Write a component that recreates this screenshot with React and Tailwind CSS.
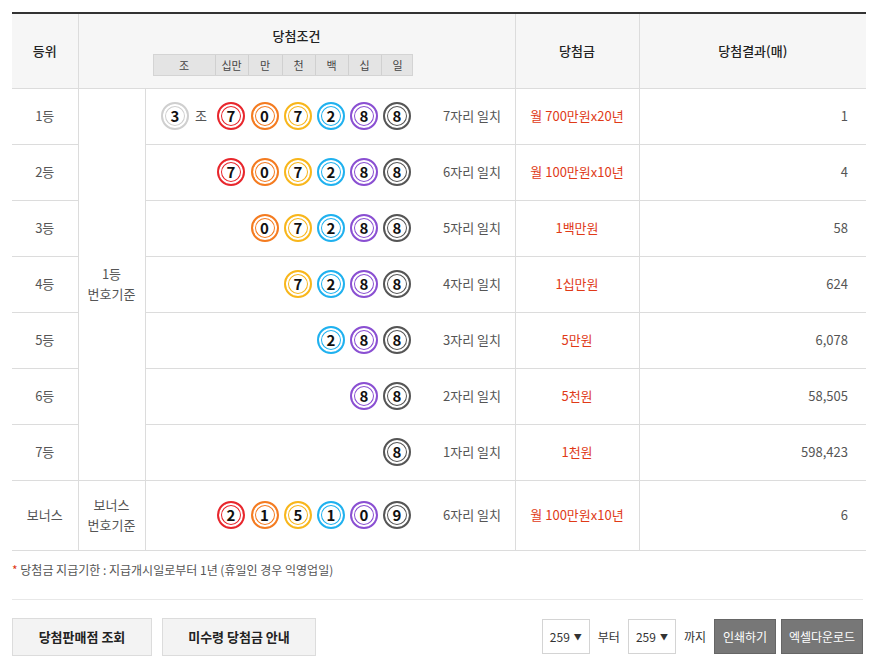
import React from 'react';

const RING = {
  r: 'border-[#e8262c] shadow-[inset_0_0_0_2px_#fff,inset_0_0_0_3px_#e8262c]',
  o: 'border-[#f47b20] shadow-[inset_0_0_0_2px_#fff,inset_0_0_0_3px_#f47b20]',
  y: 'border-[#f8b61b] shadow-[inset_0_0_0_2px_#fff,inset_0_0_0_3px_#f8b61b]',
  b: 'border-[#1fb1ef] shadow-[inset_0_0_0_2px_#fff,inset_0_0_0_3px_#1fb1ef]',
  p: 'border-[#8a4fd2] shadow-[inset_0_0_0_2px_#fff,inset_0_0_0_3px_#8a4fd2]',
  k: 'border-[#555] shadow-[inset_0_0_0_2px_#fff,inset_0_0_0_3px_#555]',
  g: 'border-[#cfcfcf] shadow-[inset_0_0_0_2px_#fff,inset_0_0_0_3px_#cfcfcf]',
};

const Ball = ({ n, c }) => (
  <span className={`w-[28px] h-[28px] rounded-full border-2 bg-white flex items-center justify-center text-[15px] font-bold text-[#111] ${RING[c]}`}>
    {n}
  </span>
);

const main = [['7', 'r'], ['0', 'o'], ['7', 'y'], ['2', 'b'], ['8', 'p'], ['8', 'k']];
const bonus = [['2', 'r'], ['1', 'o'], ['5', 'y'], ['1', 'b'], ['0', 'p'], ['9', 'k']];

const rows = [
  { rank: '1등', n: 6, jo: true, match: '7자리 일치', prize: '월 700만원x20년', count: '1' },
  { rank: '2등', n: 6, match: '6자리 일치', prize: '월 100만원x10년', count: '4' },
  { rank: '3등', n: 5, match: '5자리 일치', prize: '1백만원', count: '58' },
  { rank: '4등', n: 4, match: '4자리 일치', prize: '1십만원', count: '624' },
  { rank: '5등', n: 3, match: '3자리 일치', prize: '5만원', count: '6,078' },
  { rank: '6등', n: 2, match: '2자리 일치', prize: '5천원', count: '58,505' },
  { rank: '7등', n: 1, match: '1자리 일치', prize: '1천원', count: '598,423' },
];

const Balls = ({ list, n, jo }) => (
  <div className="ml-[8px] w-[268px] grid grid-cols-[61px_33px_34px_33px_33px_33px_33px] items-center">
    <div className="flex items-center justify-center gap-[6px]">
      {jo && (<><Ball n="3" c="g" /><span className="text-[#555]">조</span></>)}
    </div>
    {list.map((b, i) => (
      <div key={i} className="flex justify-center">{i >= 6 - n && <Ball n={b[0]} c={b[1]} />}</div>
    ))}
  </div>
);

const td = 'border border-[#dcdcdc]';

export default function App() {
  return (
    <div className="w-[875px] h-[656px] bg-white px-[12px] pt-[12px] text-[13px] text-[#555]" style={{ fontFamily: '"Noto Sans CJK KR", "Noto Sans", sans-serif' }}>
      <table className="w-[854px] border-collapse border-t-2 border-t-[#333] table-fixed">
        <colgroup>
          <col className="w-[66px]" />
          <col className="w-[67px]" />
          <col className="w-[370px]" />
          <col className="w-[124px]" />
          <col className="w-[227px]" />
        </colgroup>
        <thead>
          <tr className="h-[75px] bg-[#f6f6f6] text-[#222]">
            <th className={`${td} border-t-0 border-l-0 font-medium`}>등위</th>
            <th colSpan={2} className={`${td} border-t-0 font-medium align-top`}>
              <div className="pt-[12px] pb-[8px]">당첨조건</div>
              <div className="ml-[74px] w-[260px] grid grid-cols-[61px_33px_34px_33px_33px_33px_33px] bg-[#e4e4e4] border border-[#d4d4d4] text-[11px] font-normal text-[#444] h-[22px] leading-[20px]">
                {['조', '십만', '만', '천', '백', '십', '일'].map((t, i) => (
                  <span key={t} className={i ? 'border-l border-[#d0d0d0]' : ''}>{t}</span>
                ))}
              </div>
            </th>
            <th className={`${td} border-t-0 font-medium`}>당첨금</th>
            <th className={`${td} border-t-0 border-r-0 font-medium`}>당첨결과(매)</th>
          </tr>
        </thead>
        <tbody>
          {rows.map((r, i) => (
            <tr key={r.rank} className="h-[56px]">
              <td className={`${td} border-l-0 text-center`}>{r.rank}</td>
              {i === 0 && (
                <td rowSpan={7} className={`${td} text-center leading-[20px]`}>1등<br />번호기준</td>
              )}
              <td className={td}>
                <div className="flex items-center">
                  <Balls list={main} n={r.n} jo={r.jo} />
                  <span className="flex-1 text-center pl-[8px]">{r.match}</span>
                </div>
              </td>
              <td className={`${td} text-center text-[#e03a17]`}>{r.prize}</td>
              <td className={`${td} border-r-0 text-right pr-[18px]`}>{r.count}</td>
            </tr>
          ))}
          <tr className="h-[70px]">
            <td className={`${td} border-l-0 text-center`}>보너스</td>
            <td className={`${td} text-center leading-[20px]`}>보너스<br />번호기준</td>
            <td className={td}>
              <div className="flex items-center">
                <Balls list={bonus} n={6} />
                <span className="flex-1 text-center pl-[8px]">6자리 일치</span>
              </div>
            </td>
            <td className={`${td} text-center text-[#e03a17]`}>월 100만원x10년</td>
            <td className={`${td} border-r-0 text-right pr-[18px]`}>6</td>
          </tr>
        </tbody>
      </table>
      <p className="mt-[10px] text-[12px] text-[#555]"><span className="text-[#e03a17]">*</span> 당첨금 지급기한 : 지급개시일로부터 1년 (휴일인 경우 익영업일)</p>
      <div className="mt-[20px] border-t border-[#e8e8e8]" />
      <div className="mt-[18px] flex items-center">
        <button className="w-[140px] h-[38px] bg-[#f3f3f3] border border-[#dcdcdc] font-bold text-[#222]">당첨판매점 조회</button>
        <button className="ml-[10px] w-[154px] h-[38px] bg-[#f3f3f3] border border-[#dcdcdc] font-bold text-[#222]">미수령 당첨금 안내</button>
        <div className="ml-auto flex items-center gap-[4px] text-[12px]">
          <span className="w-[48px] h-[35px] border border-[#d4d4d4] flex items-center justify-center gap-[4px] text-[#333]">259 <span className="text-[8px]">▼</span></span>
          <span className="mx-[4px] text-[#333]">부터</span>
          <span className="w-[48px] h-[35px] border border-[#d4d4d4] flex items-center justify-center gap-[4px] text-[#333]">259 <span className="text-[8px]">▼</span></span>
          <span className="mx-[4px] text-[#333]">까지</span>
          <span className="w-[62px] h-[35px] bg-[#777] border border-[#666] text-white flex items-center justify-center">인쇄하기</span>
          <span className="ml-[1px] w-[82px] h-[35px] bg-[#777] border border-[#666] text-white flex items-center justify-center">엑셀다운로드</span>
        </div>
      </div>
    </div>
  );
}
